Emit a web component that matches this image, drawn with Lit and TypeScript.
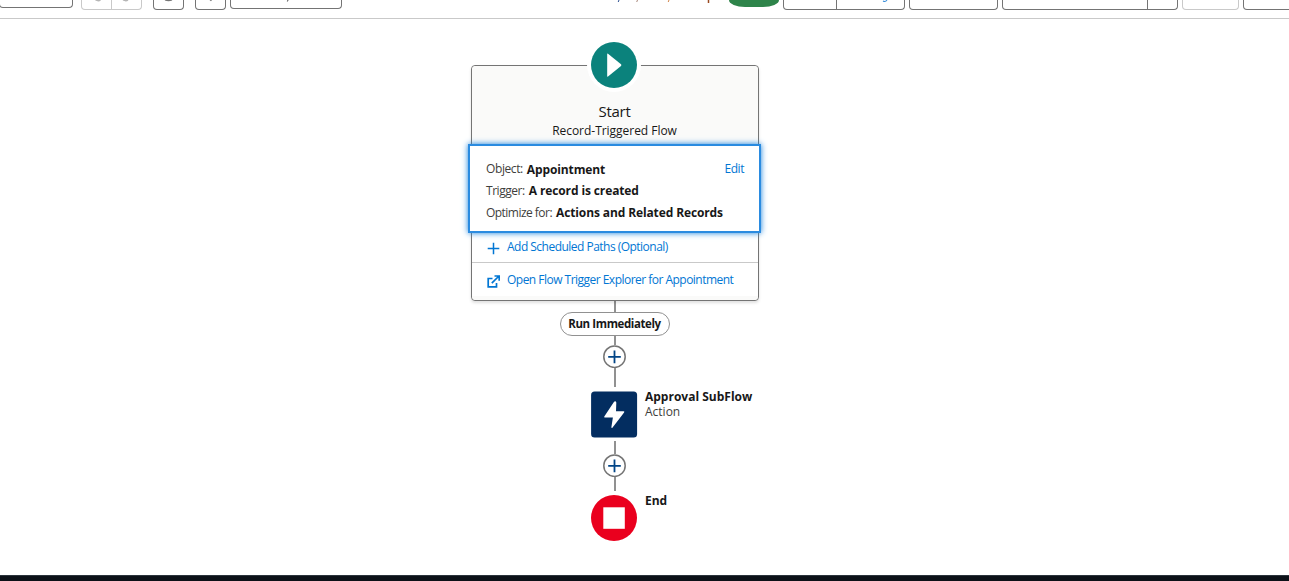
import { LitElement, html, css } from "lit";
import { customElement } from "lit/decorators.js";

@customElement("flow-toolbar")
class FlowToolbar extends LitElement {
  static styles = css`
    :host { display: flex; align-items: flex-start; height: 18px; border-bottom: 1px solid #c9c9c9; overflow: hidden; background: #fff; }
    .b { box-sizing: border-box; flex: none; height: 10px; border: 1px solid #747474; border-top: 0; border-radius: 0 0 4px 4px; display: flex; }
    .light { border-color: #c9c9c9; }
    .frag { display: block; overflow: visible; }
    .select { width: 74px; height: 8px; margin-left: -1px; }
    .undo { width: 61px; margin-left: 8px; }
    .half { box-sizing: border-box; border-right: 1px solid #c9c9c9; width: 30px; height: 9px; }
    .gear { width: 31px; margin-left: 11px; }
    .cursor { width: 31px; margin-left: 11px; }
    .layout { width: 112px; height: 9px; margin-left: 4px; }
    .status { width: 110px; height: 10px; margin-left: 268px; flex: none; }
    .pill { width: 50px; height: 7px; background: #2e844a; border-radius: 0 0 16px 16px / 0 0 7px 7px; margin-left: 9px; flex: none; }
    .run { width: 122px; margin-left: 4px; }
    .run .l { width: 53px; box-sizing: border-box; border-right: 1px solid #747474; }
    .activate { width: 89px; margin-left: 4px; }
    .saveas { width: 176px; margin-left: 4px; }
    .saveas .l { width: 145px; box-sizing: border-box; border-right: 1px solid #747474; }
    .save { width: 57px; margin-left: 4px; }
    .last { width: 60px; margin-left: 4px; }
  `;
  render() {
    return html`
      <div class="b select"></div>
      <div class="b light undo">
        <div class="half"><svg class="frag" width="29" height="4"><path d="M13.500 0q3 1.500 5 0" fill="none" stroke="#b5b5b5" stroke-width="1.300" /></svg></div>
        <svg class="frag" width="29" height="4"><path d="M11 0q3 1.500 5 0" fill="none" stroke="#b5b5b5" stroke-width="1.300" /></svg>
      </div>
      <div class="b gear"><svg class="frag" width="29" height="4"><path d="M11 0q3.500 1.200 7 0" fill="none" stroke="#747474" stroke-width="1.300" /></svg></div>
      <div class="b cursor"><svg class="frag" width="29" height="4"><path d="M13.500 0h2.500l-1 1.300z" fill="#747474" /></svg></div>
      <div class="b layout"><svg class="frag" width="110" height="4"><path d="M57 0l-.6 1.500" stroke="#444" /></svg></div>
      <svg class="frag status" viewBox="0 0 110 10"><path d="M9 0l-.8 2" stroke="#2b4f91" /><path d="M27.500 0l-.8 2" stroke="#a8877a" /><path d="M59 0l-.8 2" stroke="#d08448" /><path d="M98.500 0v3" stroke="#9a4a20" stroke-width="1.500" /></svg>
      <div class="pill"></div>
      <div class="b run"><div class="l"></div><svg class="frag" width="60" height="4"><path d="M46 1q2.500 1.300 4-1" fill="none" stroke="#3a8fdb" stroke-width="1.100" /></svg></div>
      <div class="b activate"></div>
      <div class="b saveas"><div class="l"></div></div>
      <div class="b light save"></div>
      <div class="b last"></div>
    `;
  }
}

@customElement("add-button")
class AddButton extends LitElement {
  static styles = css`
    :host { display: block; width: 23px; height: 23px; margin-right: 1px; }
    svg { display: block; }
  `;
  render() {
    return html`<svg width="23" height="23" viewBox="0 0 23 23"><circle cx="11.500" cy="11.700" r="10.700" fill="#fff" stroke="#747474" stroke-width="1.500" /><path d="M11.500 5.600v12.600M5.200 11.900h12.600" stroke="#014486" stroke-width="1.800" /></svg>`;
  }
}

@customElement("start-card")
class StartCard extends LitElement {
  static styles = css`
    :host { display: block; box-sizing: border-box; width: 288px; height: 236px; border: 1px solid #747474; border-radius: 4px; background: #fff; box-shadow: 0 2px 3px rgba(0,0,0,.12); position: relative; }
    .badge { position: absolute; left: 115px; top: -28px; width: 54px; height: 54px; display: block; }
    .head { height: 78px; box-sizing: border-box; padding: 36px 1px 0 0; background: #fafaf9; border-radius: 4px 4px 0 0; text-align: center; color: #181818; }
    .title { font-size: 15px; line-height: 19px; letter-spacing: -.25px; }
    .sub { font-size: 12px; line-height: 19px; letter-spacing: -.03px; }
    .panel { box-sizing: border-box; position: relative; margin: 0 -3px 0 -4px; height: 89px; border: 2px solid #2a8be0; background: #fff; box-shadow: 0 0 6px #1b83dc; padding: 12px 15px 0 16px; color: #3e3e3c; font-size: 12px; line-height: 22px; }
    .row { display: flex; height: 22px; white-space: nowrap; }
    .row b { color: #181818; margin-left: 4px; letter-spacing: -.12px; }
    .first { line-height: 21px; }
    .first b { padding-top: 1px; }
    .k1 { letter-spacing: -.4px; }
    .k2 { letter-spacing: -.45px; }
    .k3 { letter-spacing: -.53px; }
    .edit { color: #0176d3; margin-left: auto; letter-spacing: -.45px; }
    .link { display: flex; color: #0176d3; font-size: 12px; line-height: 17px; padding-left: 15px; white-space: nowrap; letter-spacing: -.52px; }
    .link svg { flex: none; width: 13px; height: 13px; margin: 4px 7px 0 0; }
    .paths { height: 30px; box-sizing: border-box; padding-top: 5px; border-bottom: 1px solid #c9c9c9; }
    .open { height: 33px; box-sizing: border-box; padding-top: 8px; }
    .foot { height: 4px; background: #fafaf9; border-radius: 0 0 4px 4px; }
  `;
  render() {
    return html`
      <div class="head"><div class="title">Start</div><div class="sub">Record-Triggered Flow</div></div>
      <svg class="badge" viewBox="0 0 54 54"><circle cx="27" cy="27" r="27" fill="#fff" /><circle cx="27" cy="27" r="23" fill="#0b827c" /><path d="M20.200 16v22q0 1 .8.400L34 27.900q.8-.8 0-1.600L21 15.700q-.8-.6-.8.300z" fill="#fff" /></svg>
      <div class="panel">
        <div class="row first"><span class="k1">Object:</span><b>Appointment</b><span class="edit">Edit</span></div>
        <div class="row"><span class="k2">Trigger:</span><b>A record is created</b></div>
        <div class="row"><span class="k3">Optimize for:</span><b>Actions and Related Records</b></div>
      </div>
      <div class="link paths"><svg viewBox="0 0 13 13"><path d="M6.500 .7v11.600M.7 6.500h11.600" stroke="#0176d3" stroke-width="1.500" /></svg><span>Add Scheduled Paths (Optional)</span></div>
      <div class="link open"><svg viewBox="0 0 13 13"><path d="M5.500 3.500H1.200v8.300h8.300V8M4.800 8.200L11.500 1.500M7.500 1h4.700v4.700" fill="none" stroke="#0176d3" stroke-width="1.700" /></svg><span>Open Flow Trigger Explorer for Appointment</span></div>
      <div class="foot"></div>
    `;
  }
}

@customElement("app-root")
class AppRoot extends LitElement {
  static styles = css`
    :host { display: flex; flex-direction: column; height: 581px; overflow: hidden; background: #fff; font-family: "Open Sans", "Noto Sans", sans-serif; color: #181818; }
    .canvas { flex: 1; display: flex; flex-direction: column; align-items: center; padding: 46px 59px 0 0; }
    .line { width: 2px; background: #919191; }
    .a { height: 11px; } .b { height: 9px; } .c { height: 19px; }
    .d { height: 13px; margin-top: 4px; } .e { height: 14px; margin-bottom: 4px; }
    .pill { box-sizing: border-box; width: 110px; height: 24px; margin-right: 1px; border: 1px solid #919191; border-radius: 12px; text-align: center; font-size: 11.500px; letter-spacing: -.4px; line-height: 22px; font-weight: 700; background: #fff; white-space: nowrap; }
    .step { display: grid; grid-template-columns: 135px 46px 137px; column-gap: 8px; height: 46px; }
    .step svg { display: block; grid-column: 2; overflow: visible; }
    .label { font-size: 12px; line-height: 15px; white-space: nowrap; }
    .kind { color: #3e3e3c; }
    .action { margin-top: 4px; }
    .action .label { margin-top: -2px; }
    .end .label { margin-top: -2px; }
    .taskbar { height: 6px; background: #0c1118; box-sizing: border-box; border-top: 1px solid #2b343c; }
  `;
  render() {
    return html`
      <flow-toolbar></flow-toolbar>
      <div class="canvas">
        <start-card></start-card>
        <div class="line a"></div>
        <div class="pill"><span>Run Immediately</span></div>
        <div class="line b"></div>
        <add-button></add-button>
        <div class="line c"></div>
        <div class="step action">
          <svg width="46" height="46" viewBox="0 0 46 46"><rect x=".1" y=".4" width="46" height="46" rx="3.500" fill="#032d60" /><path d="M22.900 10.900L13.300 25.400q-.6 1 .6 1h8l-1.500 9.500q0 1.800 1.200.5L33.100 21.400q.7-1.200-.6-1.200h-7.500l.3-8.600q-.7-2.400-2.400-.7z" fill="#fff" /></svg>
          <div class="label"><b>Approval SubFlow</b><br /><span class="kind">Action</span></div>
        </div>
        <div class="line d"></div>
        <add-button></add-button>
        <div class="line e"></div>
        <div class="step end">
          <svg width="46" height="46" viewBox="0 0 46 46"><circle cx="23" cy="23" r="23" fill="#ea001e" /><rect x="12.300" y="12.300" width="21.500" height="21.500" fill="#fff" /></svg>
          <div class="label"><b>End</b></div>
        </div>
      </div>
      <div class="taskbar"></div>
    `;
  }
}
